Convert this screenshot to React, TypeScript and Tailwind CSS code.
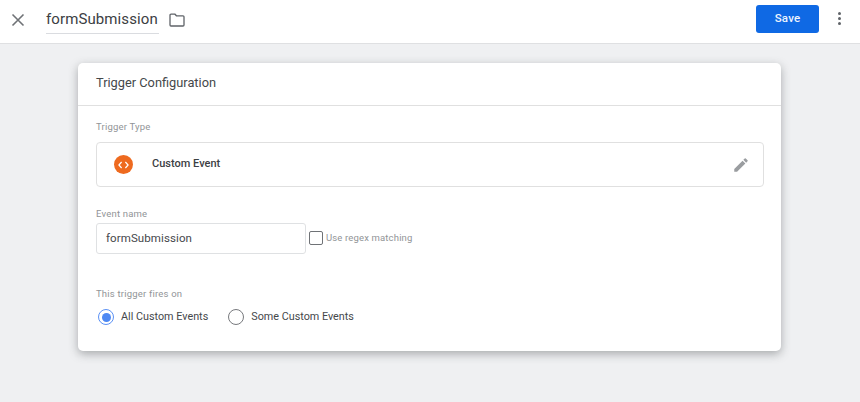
import React from "react";

const font = { fontFamily: 'Roboto, "Noto Sans", sans-serif' };

export default function App() {
  return (
    <div className="w-[860px] h-[402px] overflow-hidden bg-[#eff0f2] flex flex-col antialiased" style={font}>
      <header className="h-[44px] shrink-0 bg-white border-b border-[#dfe0e2] flex items-center pb-[4px]">
        <svg className="ml-[11px] w-[14px] h-[14px]" viewBox="0 0 14 14" fill="none" stroke="#6f7276" strokeWidth="1.6">
          <path d="M1.5 1.5 12.5 12.5M12.5 1.5 1.5 12.5" />
        </svg>
        <div className="ml-[21px] h-[26px] mt-[3px] border-b border-[#dadce0] flex items-center text-[15px] text-[#3c4043] pb-[2px] tracking-[0.1px] w-[113px] whitespace-nowrap">
          formSubmission
        </div>
        <svg className="ml-[10px] w-[16px] h-[14px]" viewBox="0 0 16 14" fill="none" stroke="#5f6368" strokeWidth="1.3">
          <path d="M1 2.2c0-.6.4-1 1-1h4l1.4 1.6H14c.6 0 1 .4 1 1V12c0 .6-.4 1-1 1H2c-.6 0-1-.4-1-1z" />
        </svg>
        <div className="flex-1" />
        <button className="w-[63px] h-[28px] -mt-[2px] rounded-[3px] bg-[#0f69e4] text-[#eef4fe] text-[11.5px] font-medium tracking-[0.2px]">Save</button>
        <div className="ml-[19px] mr-[19px] -mt-[2px] flex flex-col gap-[2px]">
          <span className="w-[3px] h-[3px] rounded-full bg-[#5f6368]" />
          <span className="w-[3px] h-[3px] rounded-full bg-[#5f6368]" />
          <span className="w-[3px] h-[3px] rounded-full bg-[#5f6368]" />
        </div>
      </header>
      <main className="mt-[19px] ml-[78px] w-[703px] h-[288px] bg-white rounded-[5px] shadow-[0_3px_10px_rgba(60,64,67,0.4)] flex flex-col">
        <div className="h-[43px] shrink-0 border-b border-[#e0e0e0] flex items-center pl-[18px] pb-[3px] text-[12.8px] text-[#45484b]">
          Trigger Configuration
        </div>
        <div className="flex flex-col pl-[18px] pr-[17px]">
          <div className="mt-[15px] text-[9.5px] leading-[12px] text-[#919497] tracking-[0.2px]">Trigger Type</div>
          <div className="mt-[9px] h-[45px] border border-[#e0e0e0] rounded-[4px] flex items-center">
            <div className="ml-[17px] w-[19px] h-[19px] rounded-full bg-[#ee6a1f] flex items-center justify-center">
              <svg className="w-[11px] h-[8px]" viewBox="0 0 11 8" fill="none" stroke="#fff" strokeWidth="1.2">
                <path d="M3.6 1 .9 4l2.7 3M7.4 1l2.7 3-2.7 3" />
              </svg>
            </div>
            <span className="ml-[19px] text-[11px] font-medium text-[#3c4043]">Custom Event</span>
            <div className="flex-1" />
            <svg className="mr-[13px] w-[18px] h-[18px]" viewBox="0 0 24 24" fill="#9a9da0">
              <path d="M3 17.25V21h3.75L17.81 9.94l-3.75-3.75L3 17.25zM20.71 7.04a1 1 0 0 0 0-1.41l-2.34-2.34a1 1 0 0 0-1.41 0l-1.83 1.83 3.75 3.75 1.83-1.83z" />
            </svg>
          </div>
          <div className="mt-[21px] text-[9.5px] leading-[12px] text-[#919497] tracking-[0.2px]">Event name</div>
          <div className="mt-[3px] flex items-center">
            <div className="w-[210px] h-[31px] border border-[#dfe1e3] rounded-[3px] flex items-center pl-[9px] text-[11.5px] text-[#45484b] tracking-[0.1px]">
              formSubmission
            </div>
            <div className="ml-[3px] -mt-[1px] w-[14px] h-[14px] border-[1.5px] border-[#6f7276] rounded-[2px]" />
            <span className="ml-[3px] text-[9.5px] text-[#919497] tracking-[0.15px]">Use regex matching</span>
          </div>
          <div className="mt-[34px] text-[9.5px] leading-[12px] text-[#919497] tracking-[0.2px]">This trigger fires on</div>
          <div className="mt-[9px] flex items-center">
            <div className="ml-[2px] w-[16px] h-[16px] rounded-full border-[1.5px] border-[#5b91f5] flex items-center justify-center">
              <div className="w-[9px] h-[9px] rounded-full bg-[#4d88f3]" />
            </div>
            <span className="ml-[7px] text-[10.8px] text-[#45484b]">All Custom Events</span>
            <div className="ml-[20px] w-[16px] h-[16px] rounded-full border-[1.5px] border-[#77797d]" />
            <span className="ml-[7px] text-[10.8px] text-[#45484b]">Some Custom Events</span>
          </div>
        </div>
      </main>
    </div>
  );
}
